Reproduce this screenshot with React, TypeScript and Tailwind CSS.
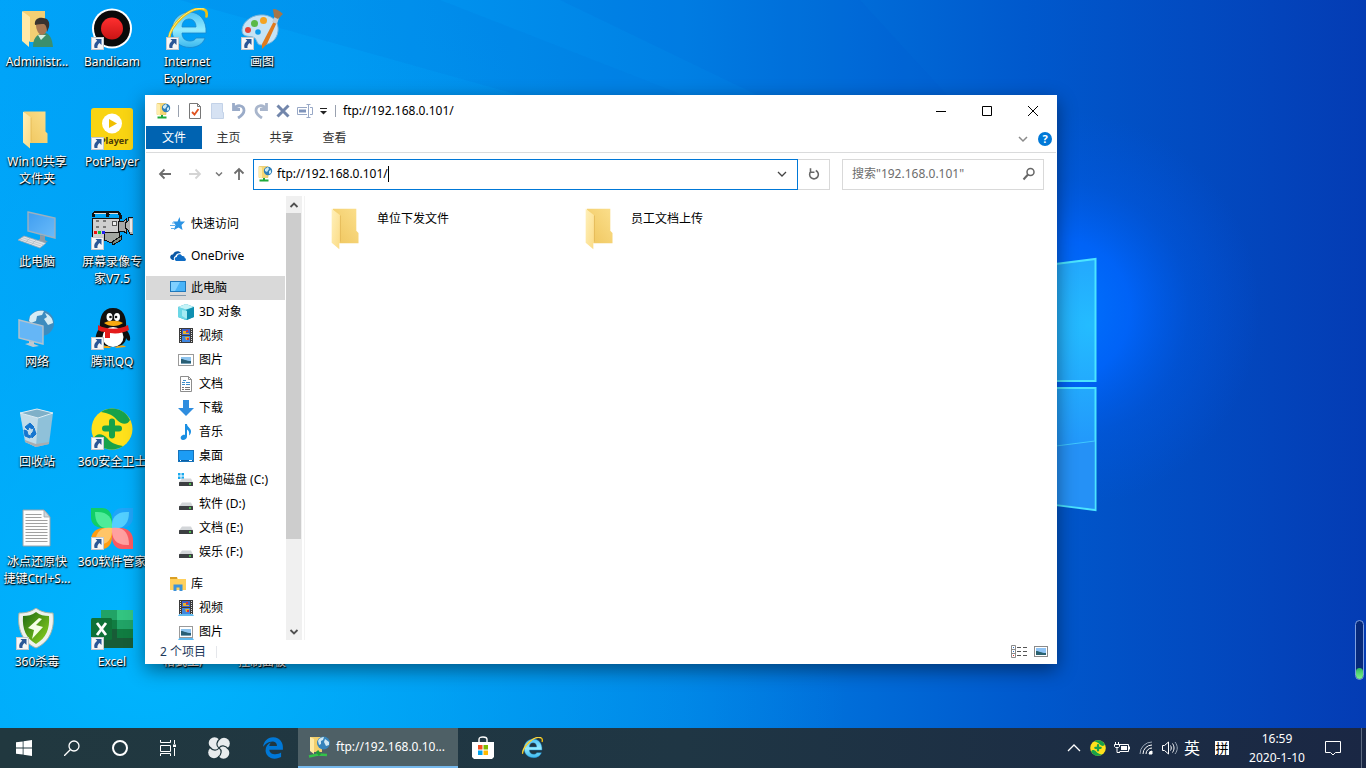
import { useState, type ReactNode } from 'react';
import { FaEdgeLegacy } from 'react-icons/fa';

interface DesktopItem {
  name: string;
  icon: ReactNode;
  shortcut?: boolean;
}

interface NavItem {
  name: string;
  icon: ReactNode;
  child?: boolean;
  active?: boolean;
  group?: boolean;
}

/* ---------- desktop icons, 42px box ---------- */

function FolderIcon({ className = 'size-[42px]' }: { className?: string }) {
  return (
    <svg viewBox="0 0 42 42" className={className}>
      <defs>
        <linearGradient id="folderBack" x1="0" x2="1" y1="1" y2="0">
          <stop offset="0" stopColor="#efc55c" />
          <stop offset="1" stopColor="#fbdf8c" />
        </linearGradient>
        <linearGradient id="folderFlap" x1="0" x2="1" y1="0" y2="1">
          <stop offset="0" stopColor="#fff0ba" />
          <stop offset="1" stopColor="#fbdb84" />
        </linearGradient>
      </defs>
      <path d="M8 3.500h21.500v20l2 2v9.500H14z" fill="url(#folderBack)" />
      <path d="M7 3.500l8 6v24l-1 1v6l-7-6z" fill="url(#folderFlap)" />
      <path d="M15 9.500v24" stroke="#dcae48" strokeWidth=".6" />
    </svg>
  );
}

function UserFolderIcon() {
  return (
    <svg viewBox="0 0 42 42" className="size-[42px]">
      <path d="M7 3h22v31H14z" fill="#f3cf74" />
      <path d="M6 3l8 6v24l-1 1v5l-7-6z" fill="#ffe9a8" />
      <path d="M17 39c0-8 3-12 8-13l5-1c4 2 6 5 7 14z" fill="#3c8f6c" />
      <path d="M22 27l3 5 5-5z" fill="#d8efe0" />
      <path d="M20 17c0-4 3-6 6-6s6 3 6 7-3 9-6 9-6-5-6-10z" fill="#a97852" />
      <path d="M19 17c-1-6 4-8 8-7 5 0 7 4 6 9l-2 5c0-4-1-7-3-8-3 0-6 0-9 1z" fill="#39332f" />
    </svg>
  );
}

function BandicamIcon() {
  return (
    <svg viewBox="0 0 42 42" className="size-[42px]">
      <defs>
        <linearGradient id="rec" x1="0" x2="0" y1="0" y2="1">
          <stop offset="0" stopColor="#ff3030" />
          <stop offset="1" stopColor="#c91414" />
        </linearGradient>
      </defs>
      <circle cx="21" cy="20.500" r="20" fill="#fff" />
      <circle cx="21" cy="20.500" r="18" fill="#0a0a0a" />
      <circle cx="21" cy="20.500" r="11" fill="url(#rec)" />
    </svg>
  );
}

function IeIcon({ className = 'size-[42px]' }: { className?: string }) {
  return (
    <svg viewBox="0 0 42 42" className={className}>
      <defs>
        <linearGradient id="ieBlue" x1="0" x2="0" y1="0" y2="1">
          <stop offset="0" stopColor="#4fc3f7" />
          <stop offset=".5" stopColor="#93ebff" />
          <stop offset="1" stopColor="#3bb8ee" />
        </linearGradient>
      </defs>
      <path
        d="M40 25H16c0 5 3 8 8 8 3 0 5-1 6-3h9c-2 6-8 9.500-15 9.500C14 39.500 6 33 6 22S14 4 23.500 4 41 12 40 25zM16 19h14c0-5-3-8-7-8s-7 3-7 8z"
        fill="url(#ieBlue)"
        stroke="#1b86cc"
        strokeWidth=".8"
      />
      <path d="M3 31C4 17 25-3 38 1.500c3 1 3 4 2.500 7" fill="none" stroke="#f0c010" strokeWidth="2.600" strokeLinecap="round" />
      <path d="M3 29C5 16 25-3 38 1" fill="none" stroke="#fff08a" strokeWidth="1" strokeLinecap="round" />
    </svg>
  );
}

function PaintIcon() {
  return (
    <svg viewBox="0 0 42 42" className="size-[42px]">
      <path
        d="M1 22C2 12 13 6 23 7c9 1 15 7 14 16-1 9-8 14-17 14-5 0-3-6-8-8-5-1-11 0-11-7z"
        fill="#c5e3f5"
        stroke="#7bb4da"
      />
      <circle cx="7" cy="22" r="3" fill="#e2453a" />
      <circle cx="13.500" cy="15.500" r="3.500" fill="#5ab947" />
      <circle cx="22.500" cy="12.500" r="3.500" fill="#f4a321" />
      <circle cx="17" cy="24" r="2.800" fill="#0d9bea" />
      <path d="M33 13l3 1-10 22-5 5 0-5z" fill="#e07a1d" />
      <path d="M31 14l3-6 4 2-2 6z" fill="#c5ccd2" />
      <path d="M32 1c4 0 7 2 10 5-2 2-3 3-5 5l-4-2c0-3-1-6-1-8z" fill="#a3764a" />
    </svg>
  );
}

function PotPlayerIcon() {
  return (
    <svg viewBox="0 0 42 42" className="size-[42px]">
      <rect width="42" height="42" rx="3" fill="#f9d412" />
      <circle cx="21" cy="15.500" r="10" fill="#fff" />
      <path d="M18 11l8 4.500-8 4.500z" fill="#f0bf00" />
      <text x="9" y="36" fontSize="9" fontWeight="700" fill="#4a3a08" fontFamily="Noto Sans, sans-serif">
        Player
      </text>
    </svg>
  );
}

function ComputerIcon() {
  return (
    <svg viewBox="0 0 42 42" className="size-[42px]">
      <defs>
        <linearGradient id="screen" x1="0" x2="1" y1="0" y2="1">
          <stop offset="0" stopColor="#3f9df0" />
          <stop offset="1" stopColor="#6bbcfa" />
        </linearGradient>
      </defs>
      <path d="M12 4l27 6v20l-27-7z" fill="url(#screen)" stroke="#9cb0bf" strokeWidth="1.400" />
      <path d="M24 27l5 1v4l3 2-6 1-5-2 3-2z" fill="#8d9aa5" />
      <path d="M2 32l6-4 22 7-6 5z" fill="#dfe4e8" stroke="#97a4ae" strokeWidth=".8" />
      <path d="M4 31l21 7M6 29.500l21 7M9 35l5-5M15 37l5-5" stroke="#a9b3bc" strokeWidth=".6" />
    </svg>
  );
}

function NetworkIcon() {
  return (
    <svg viewBox="0 0 42 42" className="size-[42px]">
      <circle cx="25" cy="15" r="13" fill="#3d8cbf" />
      <path d="M14 8c4-5 9-6 14-5l-2 4-5 1-1 5-5 2-2-2zM29 5c5 2 8 6 8 10l-5 2-4-6 3-2z" fill="#d4ecf5" />
      <path d="M3 12l24 6v18L3 30z" fill="#65b6f6" stroke="#b4c2cd" strokeWidth="1.400" />
      <path d="M13 33l5 1v2l5 2-6 1-8-3 4-1z" fill="#c0c8ce" />
    </svg>
  );
}

function CameraIcon() {
  return (
    <svg viewBox="0 0 42 42" className="size-[42px]" shapeRendering="crispEdges">
      <path d="M2 9V6l3-2h11l2 3M16 9V6l3-2h8l2 3v4" fill="none" stroke="#111" strokeWidth="3" />
      <path d="M3 6l2-1h10M18 6l1-1h8" fill="none" stroke="#ddd" />
      <path d="M1 10h27v20H1z" fill="#cfcfcf" stroke="#111" />
      <path d="M27 13h6l2-2v14l-3-2h-5z" fill="#a8a8a8" stroke="#111" />
      <path d="M34 15l3-2 1-4h5v17h-4l-2-4-3-2z" fill="#b4b4b4" stroke="#111" />
      <path d="M40 11v13" stroke="#eee" strokeWidth="2" />
      <path d="M13 24h15l1 7-8 4-8-3z" fill="#a2a6a0" stroke="#111" />
      <path d="M21 34l9-6v4l-8 5z" fill="#7e8a7c" stroke="#111" />
      <path d="M5 13h3M12 13h3M5 19h3M12 19h3" stroke="#777" strokeWidth="2" />
      <path d="M21 13h4v4h-4z" fill="#eee" stroke="#555" />
      <path d="M3 23h3v3H3z" fill="#e11" />
      <path d="M7 23h3v3H7z" fill="#1b3" />
      <path d="M11 23h3v3h-3z" fill="#22e" />
    </svg>
  );
}

function QqIcon() {
  return (
    <svg viewBox="0 0 42 42" className="size-[42px]">
      <path d="M5 32c-1-4 1-9 4-12l24-1c4 4 7 9 6 13-1 2-3 0-4-2 0 5-5 9-13 9S9 36 9 29c-1 2-3 4-4 3z" fill="#101010" />
      <path d="M9 21C8 8 12 0 22 0s14 8 13 21z" fill="#101010" />
      <ellipse cx="22" cy="29" rx="10.500" ry="10" fill="#fff" />
      <ellipse cx="18.500" cy="9" rx="3" ry="4" fill="#fff" />
      <ellipse cx="26" cy="9" rx="3" ry="4" fill="#fff" />
      <circle cx="19.500" cy="9" r="1.300" fill="#111" />
      <circle cx="25" cy="9" r="1.300" fill="#111" />
      <path d="M13 15c5-3 14-3 19 0-5 4-14 4-19 0z" fill="#f8a910" />
      <path d="M7 17c9 5 21 5 30 0l1 5c-6 3-12 4-19 3v5h-5v-6c-3 0-5-1-7-2z" fill="#e41b1b" />
      <path d="M9 40c2-3 8-3 11 0zM24 40c3-3 9-3 11-1z" fill="#f5a30e" />
    </svg>
  );
}

function RecycleIcon() {
  return (
    <svg viewBox="0 0 42 42" className="size-[42px]">
      <path d="M4 5l17-4 16 4-4 31-13 3-10-5z" fill="#9fc3d5" fillOpacity=".9" />
      <path d="M4 5l18 5-2 29-11-5z" fill="#d5e7f0" fillOpacity=".7" />
      <path d="M9 32l11 4 13-2v2l-13 3-11-5z" fill="#a9adb0" />
      <path d="M4 5l17-4 16 4-15 5z" fill="#7fb0c8" stroke="#dcecf4" />
      <path d="M9 19l5-4 4 4-2 2-3-2-1 3zM8 22l3 1 1 4 3 1-1 2-5-2zM18 20l2 6-4 4-1-4 2-2z" fill="#1576d0" stroke="#1576d0" />
    </svg>
  );
}

function Safe360Icon({ className = 'size-[42px]' }: { className?: string }) {
  return (
    <svg viewBox="0 0 42 42" className={className}>
      <circle cx="21" cy="21" r="20.500" fill="#ffe11c" />
      <path d="M10 4C18-2 33-1 39 12c-3 6-9 4-13 0-4-5-9-7-16-8z" fill="#17a24a" />
      <path d="M32 38C24 44 9 43 3 30c3-6 9-4 13 0 4 5 9 7 16 8z" fill="#17a24a" />
      <path d="M21 13.500v14M14 20.500h14" stroke="#17a24a" strokeWidth="6" strokeLinecap="round" />
    </svg>
  );
}

function TextFileIcon() {
  return (
    <svg viewBox="0 0 42 42" className="size-[42px]">
      <path d="M7 2h21l6 7v29H7z" fill="#fdfdfd" stroke="#9aa3aa" />
      <path d="M28 2v7h6z" fill="#cfd6da" stroke="#9aa3aa" strokeWidth=".8" />
      <path
        d="M9.500 6.500h16M9.500 9.500h16M9.500 12.500h22M9.500 15.500h22M9.500 18.500h22M9.500 21.500h22M9.500 24.500h22M9.500 27.500h22M9.500 30.500h22M9.500 33.500h22"
        stroke="#a0a0a0"
      />
    </svg>
  );
}

function SoftManagerIcon() {
  return (
    <svg viewBox="0 0 42 42" className="size-[42px]">
      <path d="M0 0h11c7 0 10 6 10 12v8H12C5 20 0 16 0 9z" fill="#10ce68" />
      <path d="M42 0H31c-7 0-10 6-10 12v8h9c7 0 12-4 12-11z" fill="#1fa4f8" />
      <path d="M0 41h11c7 0 10-6 10-12v-9h-9C5 20 0 25 0 32z" fill="#ff9c12" />
      <path d="M42 41H31c-7 0-10-6-10-12v-9h9c7 0 12 5 12 12z" fill="#fb5a62" />
      <path d="M21 20C9 22 4 15 4 4c12-1 18 5 17 16z" fill="#4cec99" />
      <path d="M21 20C33 22 38 15 38 4c-12-1-18 5-17 16z" fill="#53cfff" />
      <path d="M21 20C9 18 4 25 4 37c12 1 18-6 17-17z" fill="#ffc568" />
      <path d="M21 20C33 18 38 25 38 37c-12 1-18-6-17-17z" fill="#ffa0a0" />
    </svg>
  );
}

function ShieldIcon() {
  return (
    <svg viewBox="0 0 42 42" className="size-[42px]">
      <defs>
        <linearGradient id="shieldGreen" x1="0" x2="1" y1="0" y2="1">
          <stop offset="0" stopColor="#1f6a12" />
          <stop offset="1" stopColor="#8fd61e" />
        </linearGradient>
      </defs>
      <path d="M20 0c5 4 11 5 17 5 2 15-3 29-17 35C6 34 1 20 3 5c6 0 12-1 17-5z" fill="#eef2ee" stroke="#a3b3a5" />
      <path d="M20 4c4 3 8 4 13 4 1 13-3 22-13 28C10 30 6 21 7 8c5 0 9-1 13-4z" fill="url(#shieldGreen)" />
      <path d="M23 10L12 20l6 2-2 9 11-12-7-2 6-6z" fill="#f5ffe6" />
    </svg>
  );
}

function ExcelIcon() {
  return (
    <svg viewBox="0 0 42 42" className="size-[42px]">
      <path d="M10 2h32v38H10z" fill="#185c37" />
      <path d="M10 2h16v10H10z" fill="#21a366" />
      <path d="M26 2h16v10H26z" fill="#33c481" />
      <path d="M10 12h16v9H10z" fill="#107c41" />
      <path d="M26 12h16v9H26z" fill="#21a366" />
      <path d="M26 21h16v9H26z" fill="#107c41" />
      <rect y="10" width="21" height="22" rx="1.500" fill="#0f7138" />
      <path d="M6 15l9 12M15 15L6 27" stroke="#fff" strokeWidth="2.800" />
    </svg>
  );
}

function BlankIcon() {
  return <svg viewBox="0 0 42 42" className="size-[42px]" />;
}

function ShortcutArrow() {
  return (
    <svg viewBox="0 0 13 13" className="absolute bottom-0 left-0 size-[13px]">
      <rect x=".5" y=".5" width="12" height="12" fill="#f6f6f6" stroke="#c4c9ce" />
      <path d="M4.500 2h6v6L8.500 6C7 7 6 9 6.500 11H3.500C2.500 8 4 5.500 6.200 3.800z" fill="#2b5797" />
    </svg>
  );
}

/* ---------- small icons ---------- */

function FtpIcon({ className = 'size-4' }: { className?: string }) {
  return (
    <svg viewBox="0 0 16 16" className={className}>
      <path d="M1 .5h9v11H1z" fill="#f7d774" stroke="#e3bd4f" strokeWidth=".6" />
      <path d="M1 .5l3 1v11l-3-1z" fill="#ffedab" />
      <circle cx="10" cy="5" r="4.200" fill="#2f7fb9" />
      <path d="M7 3l3-2 1 2-2 3-2-1zM11 5l2-1v3l-2 1z" fill="#cdeaf5" />
      <path d="M1.500 14.500h9M6 12v3" stroke="#1faa3a" strokeWidth="2" />
    </svg>
  );
}

function FtpLargeIcon() {
  return (
    <svg viewBox="0 0 22 22" className="size-[22px]">
      <path d="M2 1h12v15H6z" fill="#f3cf6c" />
      <path d="M2 1l4 2v15l-4-3z" fill="#ffeaa3" />
      <circle cx="15.500" cy="7" r="6.500" fill="#3584bb" />
      <path d="M10 5c1-3 4-4 6-4l-1 3-2 1v3l-2 1zM17 3l4 3v3l-3 1-2-4z" fill="#cfe8f3" />
      <path d="M1 20.500l9-2 9 .5" fill="none" stroke="#35c24a" strokeWidth="2.500" />
      <path d="M9 15l3 4" stroke="#229a38" strokeWidth="3" />
    </svg>
  );
}

function StarIcon() {
  return (
    <svg viewBox="0 0 16 16" className="size-4">
      <path d="M9.500 1l1 4.500H15L11.500 9l1 5-4-2.500L4 14l1.500-5L3 5.500h4.500z" fill="#2c94e4" />
      <path d="M0 9.500h5M1 12.500h4M2 7h3" stroke="#5eb0ec" />
    </svg>
  );
}

function OneDriveIcon() {
  return (
    <svg viewBox="0 0 16 16" className="size-4">
      <path d="M1 11C-1 9 1 6 3 6.500 4 3 9 2 11 5 8 5 6 6 5.500 8 4 8.500 3.500 10 4 12 3 12 2 12 1 11z" fill="#0a57a4" />
      <path d="M6 13c-2-1-1.500-4 .8-4C7 6 11 5 12 8c2-.5 3 .8 2.600 2 2 .3 1.500 3 0 3z" fill="#0f6cc4" />
    </svg>
  );
}

function PcIcon() {
  return (
    <svg viewBox="0 0 16 16" className="size-4">
      <rect x=".5" y="1.500" width="15" height="10" fill="#49b4f8" stroke="#1f78bb" />
      <path d="M1 2h9L5 11H1z" fill="#7fd0ff" />
      <path d="M0 15.500h16" stroke="#8097ab" />
    </svg>
  );
}

function CubeIcon() {
  return (
    <svg viewBox="0 0 16 16" className="size-4">
      <path d="M0 3l8-3 8 3v10l-8 3-8-3z" fill="#25a9c2" />
      <path d="M0 3l8 2.500V16l-8-3z" fill="#6bd7e6" />
      <path d="M0 3l8-3 8 3-8 2.500z" fill="#c4f3f8" />
      <path d="M4 6l5 1v8l-5-3z" fill="#a6ebf3" />
      <path d="M9 6l7-3v10l-7 3z" fill="#0f8fb0" />
    </svg>
  );
}

function FilmIcon({ tray }: { tray?: boolean }) {
  return (
    <svg viewBox="0 0 16 16" className="size-4">
      {tray && <path d="M0 16l2-3h12l2 3z" fill="#5fb9ee" />}
      <rect x="1" y="0" width="14" height={tray ? 14 : 15} fill="#3b3b3b" />
      <rect x="4" y="1" width="8" height="6" fill="#3c62c9" />
      <rect x="4" y="8" width="8" height="6" fill="#3f86e0" />
      <path d="M5 3h3v2h3v1H5zM7 9h4v3H8z" fill="#e5b42b" />
      <path d="M8 2h2v2H8zM9 10h2v2H9z" fill="#d33" />
      <path d="M2.500 1v13M13.500 1v13" stroke="#ddd" strokeDasharray="1 1" />
    </svg>
  );
}

function PictureIcon({ tray }: { tray?: boolean }) {
  return (
    <svg viewBox="0 0 16 16" className="size-4">
      {tray && <path d="M0 16l2-3h12l2 3z" fill="#5fb9ee" />}
      <rect x={tray ? 1.5 : 0.5} y="2.500" width={tray ? 13 : 15} height="11" fill="#fff" stroke="#9a9a9a" />
      <rect x="3" y="5" width="10" height="6.500" fill="#8cc3ee" />
      <path d="M3 7c3 0 5 2 10 2v2.500H3z" fill="#295e74" />
    </svg>
  );
}

function DocIcon() {
  return (
    <svg viewBox="0 0 16 16" className="size-4">
      <path d="M2.500.5h8l3 3v12h-11z" fill="#fff" stroke="#8d8d8d" />
      <path d="M10.500.5v3h3" fill="none" stroke="#8d8d8d" />
      <path d="M4 6.500h3M8 6.500h4M4 8.500h3M8 8.500h4M5 4.500h3" stroke="#3d8fcb" />
      <path d="M4 11.500h2M7 11.500h5M4 13.500h2M7 13.500h5" stroke="#777" />
    </svg>
  );
}

function DownloadIcon() {
  return (
    <svg viewBox="0 0 16 16" className="size-4">
      <path d="M5 0h6v8h5l-8 8-8-8h5z" fill="#2f8ddf" />
    </svg>
  );
}

function MusicIcon() {
  return (
    <svg viewBox="0 0 16 16" className="size-4">
      <path d="M7 0h2c0 3 4 4 4 7.500 0 2-1 3-2 4 .5-3 0-5-2-6v7c0 2-2 3.500-4 3.500S2 14 3 12.500s3-2 4-1.500z" fill="#1a8fe3" />
    </svg>
  );
}

function DesktopIcon() {
  return (
    <svg viewBox="0 0 16 16" className="size-4">
      <rect x=".5" y="2.500" width="15" height="11" fill="#1c9cf5" stroke="#1673bb" />
      <path d="M1 12.500h14" stroke="#0b5fa3" />
      <path d="M2 12.500h1M11 12.500h3" stroke="#fff" />
    </svg>
  );
}

function DriveIcon({ system }: { system?: boolean }) {
  return (
    <svg viewBox="0 0 16 16" className="size-4">
      {system && <path d="M0 1h2.500v2.500H0zM3.500 1H6v2.500H3.500zM0 4.500h2.500V7H0zM3.500 4.500H6V7H3.500z" fill="#1aa9ee" />}
      <path d="M4 6.500h9l2 4H1z" fill="#d3d6d9" />
      <rect x="1" y="10" width="14" height="4" rx=".5" fill="#3c3f42" />
      <path d="M11 12h2" stroke="#4fe04f" strokeWidth="1.500" />
    </svg>
  );
}

function LibraryIcon() {
  return (
    <svg viewBox="0 0 16 16" className="size-4">
      <path d="M0 1h7l1 2h8v11H0z" fill="#ffd05c" />
      <path d="M0 1h7v2H0z" fill="#dba024" />
      <path d="M3.500 15V8.500h9V15h-3v-3.500h-3V15z" fill="#3d93d8" />
    </svg>
  );
}

const Glyph = ({ d, className = 'size-4', stroke = '#000', width = 1 }: { d: string; className?: string; stroke?: string; width?: number }) => (
  <svg viewBox="0 0 16 16" className={className} fill="none" stroke={stroke} strokeWidth={width}>
    <path d={d} />
  </svg>
);

const columns: DesktopItem[][] = [
  [
    { name: 'Administr...', icon: <UserFolderIcon /> },
    { name: 'Win10共享\n文件夹', icon: <FolderIcon /> },
    { name: '此电脑', icon: <ComputerIcon /> },
    { name: '网络', icon: <NetworkIcon /> },
    { name: '回收站', icon: <RecycleIcon /> },
    { name: '冰点还原快\n捷键Ctrl+S...', icon: <TextFileIcon /> },
    { name: '360杀毒', icon: <ShieldIcon />, shortcut: true },
  ],
  [
    { name: 'Bandicam', icon: <BandicamIcon />, shortcut: true },
    { name: 'PotPlayer', icon: <PotPlayerIcon />, shortcut: true },
    { name: '屏幕录像专\n家V7.5', icon: <CameraIcon />, shortcut: true },
    { name: '腾讯QQ', icon: <QqIcon />, shortcut: true },
    { name: '360安全卫士', icon: <Safe360Icon />, shortcut: true },
    { name: '360软件管家', icon: <SoftManagerIcon />, shortcut: true },
    { name: 'Excel', icon: <ExcelIcon />, shortcut: true },
  ],
  [
    { name: 'Internet\nExplorer', icon: <IeIcon />, shortcut: true },
    { name: '格式工厂', icon: <BlankIcon /> },
  ],
  [
    { name: '画图', icon: <PaintIcon />, shortcut: true },
    { name: '控制面板', icon: <BlankIcon /> },
  ],
];

const navItems: NavItem[] = [
  { name: '快速访问', icon: <StarIcon /> },
  { name: 'OneDrive', icon: <OneDriveIcon />, group: true },
  { name: '此电脑', icon: <PcIcon />, group: true, active: true },
  { name: '3D 对象', icon: <CubeIcon />, child: true },
  { name: '视频', icon: <FilmIcon />, child: true },
  { name: '图片', icon: <PictureIcon />, child: true },
  { name: '文档', icon: <DocIcon />, child: true },
  { name: '下载', icon: <DownloadIcon />, child: true },
  { name: '音乐', icon: <MusicIcon />, child: true },
  { name: '桌面', icon: <DesktopIcon />, child: true },
  { name: '本地磁盘 (C:)', icon: <DriveIcon system />, child: true },
  { name: '软件 (D:)', icon: <DriveIcon />, child: true },
  { name: '文档 (E:)', icon: <DriveIcon />, child: true },
  { name: '娱乐 (F:)', icon: <DriveIcon />, child: true },
  { name: '库', icon: <LibraryIcon />, group: true },
  { name: '视频', icon: <FilmIcon tray />, child: true },
  { name: '图片', icon: <PictureIcon tray />, child: true },
];

const folders = ['单位下发文件', '员工文档上传'];

function Wallpaper() {
  return (
    <svg viewBox="0 0 1366 768" preserveAspectRatio="xMidYMid slice" className="absolute inset-0 h-full w-full">
      <defs>
        <linearGradient id="sky" x1="0" x2="1" y1="0" y2="0">
          <stop offset="0" stopColor="#00a4fa" />
          <stop offset=".25" stopColor="#0099f2" />
          <stop offset=".5" stopColor="#0080e4" />
          <stop offset=".75" stopColor="#0059cd" />
          <stop offset="1" stopColor="#043cb4" />
        </linearGradient>
        <radialGradient id="glow" gradientUnits="userSpaceOnUse" cx="1060" cy="310" r="200">
          <stop offset="0" stopColor="#0074ff" />
          <stop offset=".35" stopColor="#0066ff" stopOpacity=".85" />
          <stop offset=".65" stopColor="#005cee" stopOpacity=".35" />
          <stop offset="1" stopColor="#0058e8" stopOpacity="0" />
        </radialGradient>
        <radialGradient id="floor" gradientUnits="userSpaceOnUse" cx="150" cy="640" r="700">
          <stop offset="0" stopColor="#00b8ff" stopOpacity=".9" />
          <stop offset="1" stopColor="#00a0f0" stopOpacity="0" />
        </radialGradient>
        <radialGradient id="pane" gradientUnits="userSpaceOnUse" cx="1090" cy="325" r="120">
          <stop offset="0" stopColor="#24bcff" />
          <stop offset="1" stopColor="#2298fb" />
        </radialGradient>
      </defs>
      <path d="M0 0h1366v768H0z" fill="url(#sky)" />
      <path d="M0 0h1366v768H0z" fill="url(#floor)" />
      <path d="M180 0h260l660 258z" fill="#0068d8" fillOpacity=".12" />
      <path d="M560 0h300l236 258z" fill="#0050c8" fillOpacity=".08" />
      <circle cx="1060" cy="310" r="200" fill="url(#glow)" />
      <g fill="url(#pane)" stroke="#4be4ff" strokeWidth="2">
        <path d="M960 276l135.500-17v122H960z" />
        <path d="M960 388h135.500v122l-135.500-17z" />
      </g>
      <path d="M960 458l135-17v68l-135-16z" fill="#2a8af0" fillOpacity=".45" />
      <path d="M1056 446l39-5" stroke="#3fc8ff" />
    </svg>
  );
}

function ExplorerWindow() {
  const [address, setAddress] = useState('ftp://192.168.0.101/');
  const [query, setQuery] = useState('');

  return (
    <section className="absolute top-[95px] left-[145px] flex h-[569px] w-[912px] flex-col border border-white bg-white text-black shadow-[0_6px_18px_rgba(0,0,0,0.45)]">
      {/* title bar */}
      <header className="flex h-[30px] shrink-0 items-center pl-2.5">
        <FtpIcon />
        <span className="mr-[5px] ml-1.5 h-3 w-px bg-gray-400" />
        <button aria-label="属性" className="flex w-[22px] justify-center">
          <svg viewBox="0 0 16 16" className="size-4">
            <path d="M2.500.5h8l3 3v12h-11z" fill="#fff" stroke="#777" />
            <path d="M10.500.5v3h3" fill="none" stroke="#777" />
            <path d="M5 9l2.500 2.500L11.500 6" fill="none" stroke="#e0521f" strokeWidth="1.800" />
          </svg>
        </button>
        <button aria-label="新建文件夹" className="flex w-[22px] justify-center">
          <svg viewBox="0 0 16 16" className="size-4">
            <path d="M2.500.5h11v9h1v6h-12z" fill="#d6e2f3" stroke="#c3d2e8" />
          </svg>
        </button>
        <button aria-label="撤消" className="flex w-[22px] justify-center">
          <Glyph d="M2.500 0v6.500H9M3 6C6 1 13 2 13 7.500c0 3-2 5-6 7.500" stroke="#9aabc8" width={2.8} />
        </button>
        <button aria-label="恢复" className="flex w-[22px] justify-center">
          <Glyph d="M13.500 0v6.500H7M13 6C10 1 3 2 3 7.500c0 3 2 5 6 7.500" stroke="#a9b6cc" width={2.8} />
        </button>
        <button aria-label="删除" className="flex w-[22px] justify-center">
          <Glyph d="M2.500 2.500l11 11M13.500 2.500l-11 11" stroke="#7286ab" width={3} />
        </button>
        <button aria-label="重命名" className="flex w-[22px] justify-center">
          <svg viewBox="0 0 16 16" className="size-4" fill="none" stroke="#98a8c6">
            <path d="M10 4.500H.5v7H10M13 4.500h2.500v7H13M9.500 1.500h4M9.500 14.500h4M11.500 1.500v13" />
            <path d="M2 8h7" stroke="#7f94bb" strokeWidth="3" />
          </svg>
        </button>
        <button aria-label="自定义快速访问工具栏" className="flex w-[15px] justify-center">
          <svg viewBox="0 0 8 8" className="size-2">
            <path d="M0 1.500h7" stroke="#222" />
            <path d="M0 4h7L3.500 7.500z" fill="#222" />
          </svg>
        </button>
        <span className="mr-[7px] ml-1 h-3 w-px bg-gray-400" />
        <h1 className="flex-1 text-[12px]">{address}</h1>
        <button aria-label="最小化" className="flex h-full w-[46px] items-center justify-center">
          <Glyph d="M3 8.500h10" />
        </button>
        <button aria-label="最大化" className="flex h-full w-[46px] items-center justify-center">
          <Glyph d="M3.500 3.500h9v9h-9z" />
        </button>
        <button aria-label="关闭" className="flex h-full w-[46px] items-center justify-center">
          <Glyph d="M3 3l10 10M13 3L3 13" />
        </button>
      </header>

      {/* ribbon tabs */}
      <nav className="flex h-[27px] shrink-0 items-start border-b border-[#dadbdc]">
        <button className="h-[23px] w-14 bg-[#0063b1] text-white">文件</button>
        {['主页', '共享', '查看'].map((tab) => (
          <button key={tab} className="h-6 w-[53px] text-[#333]">
            {tab}
          </button>
        ))}
        <button aria-label="展开功能区" className="mt-1 mr-[7px] ml-auto">
          <Glyph d="M4 7l4 4 4-4" stroke="#8a8a8a" width={1.5} />
        </button>
        <button aria-label="帮助" className="mt-1.5 mr-1 size-3.5 rounded-full bg-[#0078d7] text-[11px] leading-[14px] font-bold text-white">
          ?
        </button>
      </nav>

      {/* address row */}
      <div className="flex h-[42px] shrink-0 items-center pr-3">
        <button aria-label="后退" className="ml-[11px]">
          <Glyph d="M14 8H3M7.500 3.500L3 8l4.500 4.500" stroke="#6d6d6d" width={1.8} />
        </button>
        <button aria-label="前进" className="ml-3.5">
          <Glyph d="M2 8h11M8.500 3.500L13 8l-4.500 4.500" stroke="#d4d4d4" width={1.8} />
        </button>
        <button aria-label="最近浏览的位置" className="ml-2.5">
          <Glyph d="M4 6l4 4 4-4" className="size-3" stroke="#777" width={2} />
        </button>
        <button aria-label="上移" className="ml-1.5">
          <Glyph d="M8 14V3M3.500 7.500L8 3l4.500 4.500" stroke="#6d6d6d" width={1.8} />
        </button>
        <label className="ml-1.5 flex h-[31px] flex-1 items-center border border-[#0078d7] pl-1">
          <FtpIcon />
          <input
            aria-label="地址"
            value={address}
            onChange={(e) => setAddress(e.target.value)}
            className="ml-[3px] [field-sizing:content] outline-none"
          />
          <span className="h-4 w-px bg-black" />
          <span className="mr-[7px] ml-auto">
            <Glyph d="M4 6l4 4 4-4" stroke="#444" width={1.3} />
          </span>
        </label>
        <button aria-label="刷新" className="flex h-[31px] w-8 items-center justify-center border border-l-0 border-[#d9d9d9]">
          <Glyph d="M4.500 5A5 5 0 1 0 10 4M4 1.500V6h4.500" className="size-3.5" stroke="#666" width={1.8} />
        </button>
        <label className="ml-3 flex h-[31px] w-[202px] items-center border border-[#d9d9d9] pr-1.5 pl-[9px]">
          <input
            aria-label="搜索"
            value={query}
            placeholder={'搜索"192.168.0.101"'}
            onChange={(e) => setQuery(e.target.value)}
            className="min-w-0 flex-1 outline-none placeholder:text-[#6d6d6d]"
          />
          <svg viewBox="0 0 16 16" className="size-4" fill="none" stroke="#666">
            <circle cx="9.500" cy="6" r="3.500" strokeWidth="1.500" />
            <path d="M7 8.500l-4.500 5" strokeWidth="2" />
          </svg>
        </label>
      </div>

      <div className="mt-px flex min-h-0 flex-1">
        <aside className="w-[139px] shrink-0 overflow-hidden pt-4">
          {navItems.map((item, i) => (
            <a
              key={i}
              href="#"
              className={`flex h-6 items-center gap-[5px] whitespace-nowrap ${item.child ? 'pl-8' : 'pl-6'} ${item.group ? 'mt-2' : ''} ${item.active ? 'bg-[#d9d9d9]' : ''}`}
            >
              {item.icon}
              <span>{item.name}</span>
            </a>
          ))}
        </aside>
        <div className="ml-px flex w-4 shrink-0 flex-col items-center bg-[#f0f0f0]">
          <button aria-label="向上滚动" className="flex h-[17px] items-center">
            <Glyph d="M4.500 10L8 6.500l3.500 3.500" stroke="#505050" width={1.8} />
          </button>
          <div className="h-[326px] w-[15px] self-start bg-[#cdcdcd]" />
          <button aria-label="向下滚动" className="mt-auto flex h-[17px] items-center">
            <Glyph d="M4.500 6L8 9.500 11.500 6" stroke="#505050" width={1.8} />
          </button>
        </div>
        <main className="ml-0.5 flex flex-1 items-start border-l border-[#f3f3f3] pt-[9px] pl-[19px]">
          {folders.map((folder) => (
            <a key={folder} href="#" className="flex w-[254px] gap-[7px]">
              <FolderIcon className="size-[46px]" />
              <span className="pt-1.5 leading-4">{folder}</span>
            </a>
          ))}
        </main>
      </div>

      <footer className="flex h-[23px] shrink-0 items-center pr-2 pl-3.5 text-[#1e395b]">
        <span>2 个项目</span>
        <span className="ml-2.5 h-3 w-px bg-gray-200" />
        <button aria-label="详细信息" className="ml-auto">
          <svg viewBox="0 0 17 14" className="h-3.5 w-[17px]" fill="none" stroke="#8a8a8a">
            <path d="M.5.500h4v12h-4zM.5 4.500h4M.5 8.500h4" />
            <path d="M6 2.500h4M12 2.500h4M6 6.500h4M12 6.500h4M6 10.500h4M12 10.500h4" stroke="#555" />
            <path d="M2 10.500h1" stroke="#e03030" />
            <path d="M2 6.500h1M2 2.500h1" stroke="#3577c9" />
          </svg>
        </button>
        <button aria-label="大图标" className="ml-1.5">
          <svg viewBox="0 0 14 12" className="h-3 w-3.5">
            <rect x=".5" y=".5" width="13" height="10" fill="#fff" stroke="#8a8a8a" />
            <path d="M2 2h10v7H2z" fill="#8ec3f5" />
            <path d="M2 5c3 0 5 2 10 2v2H2z" fill="#2b6270" />
          </svg>
        </button>
      </footer>
    </section>
  );
}

function Taskbar() {
  return (
    <footer className="relative flex h-10 shrink-0 bg-linear-to-r from-[#21383f] via-[#1f3644] to-[#1a2744] text-white">
      <button aria-label="开始" className="flex w-12 items-center justify-center">
        <svg viewBox="0 0 16 16" className="size-4" fill="#fff">
          <path d="M0 2.300l6.700-.9v6.200H0zM7.500 1.300L16 0v7.600H7.500zM0 8.400h6.700v6.200L0 13.700zM7.500 8.400H16V16l-8.500-1.200z" />
        </svg>
      </button>
      <button aria-label="搜索" className="flex w-12 items-center justify-center">
        <svg viewBox="0 0 16 16" className="size-4" fill="none" stroke="#fff" strokeWidth="1.300">
          <circle cx="10" cy="6" r="5" />
          <path d="M6.500 9.500L0 16" />
        </svg>
      </button>
      <button aria-label="Cortana" className="flex w-12 items-center justify-center">
        <svg viewBox="0 0 16 16" className="size-4" fill="none" stroke="#fff" strokeWidth="2">
          <circle cx="8" cy="8" r="7" />
        </svg>
      </button>
      <button aria-label="任务视图" className="flex w-12 items-center justify-center">
        <svg viewBox="0 0 16 16" className="size-4" fill="none" stroke="#fff">
          <path d="M.5 0v2.500h10V0M.5 5.500h10v6H.5zM.5 16v-2.500h10V16M14.500 0v4M14.500 8v8" />
          <path d="M13 4.500h3v2.500h-3z" fill="#fff" stroke="none" />
        </svg>
      </button>
      <button aria-label="360" className="flex w-[53px] items-center justify-center">
        <svg viewBox="0 0 22 22" className="size-[22px]" fill="#e8ecee">
          <circle cx="6.500" cy="6" r="5.800" />
          <circle cx="16" cy="6.500" r="5.800" />
          <circle cx="15.500" cy="16" r="5.800" />
          <circle cx="6" cy="15.500" r="5.800" />
          <path d="M7 7h8v8H7z" />
          <path
            d="M11 11c-3-2-3-6 1-9.500M11 11c2-3 6-3 9.500 1M11 11c3 2 3 6-1 9.500M11 11c-2 3-6 3-9.500-1"
            fill="none"
            stroke="#21383f"
            strokeWidth="1.200"
          />
        </svg>
      </button>
      <button aria-label="Edge" className="flex w-[53px] items-center justify-center pl-0.5">
        <FaEdgeLegacy className="size-[22px] text-[#0078d7]" />
      </button>
      <button className="flex w-40 items-center gap-1.5 border-b-2 border-[#76b9ed] bg-[#4e6066] pl-2.5 text-[12px]">
        <FtpLargeIcon />
        <span>ftp://192.168.0.10...</span>
      </button>
      <button aria-label="Microsoft Store" className="flex w-[50px] items-center justify-center">
        <svg viewBox="0 0 24 24" className="size-6">
          <path d="M8 7V3.500C8 1.500 9.500 1 12 1s4 .5 4 2.500V7" fill="none" stroke="#fff" strokeWidth="1.400" />
          <path d="M1 6h22v15l-2 2H3l-2-2z" fill="#fff" />
          <path d="M7 9h4.500v4.500H7z" fill="#f25022" />
          <path d="M12.500 9H17v4.500h-4.500z" fill="#7fba00" />
          <path d="M7 14.500h4.500V19H7z" fill="#00a4ef" />
          <path d="M12.500 14.500H17V19h-4.500z" fill="#ffb900" />
        </svg>
      </button>
      <button aria-label="Internet Explorer" className="flex w-12 items-center justify-center">
        <IeIcon className="size-[22px]" />
      </button>

      <div className="ml-auto flex items-center">
        <button aria-label="显示隐藏的图标" className="flex w-6 justify-center">
          <Glyph d="M2 11l6-6 6 6" stroke="#fff" width={1.3} />
        </button>
        <button aria-label="360安全卫士" className="flex w-6 justify-center">
          <Safe360Icon className="size-4" />
        </button>
        <button aria-label="电源" className="flex w-6 justify-center">
          <svg viewBox="0 0 16 16" className="size-4" fill="none" stroke="#fff">
            <path d="M5 4.500h9.500v7H5.500M15.500 6.500v3M1.500 2v2M4.500 2v2M.5 4.500h5v2l-1 1h-3l-1-1zM3 8v4.500h3" />
            <path d="M7 6h6v4H7z" fill="#fff" stroke="none" />
          </svg>
        </button>
        <button aria-label="网络" className="flex w-6 justify-center">
          <svg viewBox="0 0 16 16" className="size-4" fill="none" stroke="#fff">
            <path d="M8 14a6 6 0 0 1 6-6M5 14a9 9 0 0 1 9-9" />
            <path d="M2 14A12 12 0 0 1 14 2" stroke="#9aa6b5" />
            <path d="M11 14a3 3 0 0 1 3-3v3z" fill="#fff" />
          </svg>
        </button>
        <button aria-label="音量" className="flex w-6 justify-center">
          <svg viewBox="0 0 16 16" className="size-4" fill="none" stroke="#fff">
            <path d="M.5 5.500h2l4-3.500v12l-4-3.500h-2zM8.500 5.500c1 1.500 1 3.500 0 5M10.500 3.500c2 3 2 6 0 9" />
            <path d="M13 2c3 4 3 8 0 12" stroke="#9aa6b5" />
          </svg>
        </button>
        <button className="w-6 pl-0.5 text-left text-base leading-6">英</button>
        <button className="flex w-8 justify-center">
          <span className="size-3.5 bg-white text-[13px] leading-[14px] text-black">拼</span>
        </button>
        <button className="w-[78px] text-center leading-[19px]">
          16:59
          <br />
          2020-1-10
        </button>
        <button aria-label="通知" className="flex w-[34px] justify-center">
          <Glyph d="M.5 1.500h15v11h-5L8 15l-2.500-2.500h-5z" stroke="#fff" />
        </button>
        <button aria-label="显示桌面" className="ml-[11px] h-10 w-[5px] border-l border-[#5d6a80]" />
      </div>
    </footer>
  );
}

export default function App() {
  return (
    <div className="relative flex h-screen min-h-[768px] flex-col overflow-hidden font-['Noto_Sans','Noto_Sans_CJK_SC',sans-serif] text-[12px]">
      <Wallpaper />
      <div className="relative min-h-0 flex-1">
        <div className="flex">
          {columns.map((column, i) => (
            <div key={i} className="flex h-[700px] w-[75px] flex-col justify-between">
              {column.map((item) => (
                <button key={item.name} className="flex h-[100px] flex-col items-center pt-2 pr-px">
                  <span className="relative">
                    {item.icon}
                    {item.shortcut && <ShortcutArrow />}
                  </span>
                  <span className="mt-[3px] text-center leading-[17px] whitespace-pre text-white [text-shadow:0_1px_2px_#000,1px_1px_1px_#000]">
                    {item.name}
                  </span>
                </button>
              ))}
            </div>
          ))}
        </div>
        <ExplorerWindow />
        <div className="absolute right-0.5 bottom-12 flex h-[60px] w-[9px] items-end overflow-hidden rounded-full border border-[#7d9fe0] bg-[#06297a]">
          <div className="h-[11px] w-full rounded-full bg-linear-to-b from-[#2fb862] to-[#7df58a]" />
        </div>
      </div>
      <Taskbar />
    </div>
  );
}
